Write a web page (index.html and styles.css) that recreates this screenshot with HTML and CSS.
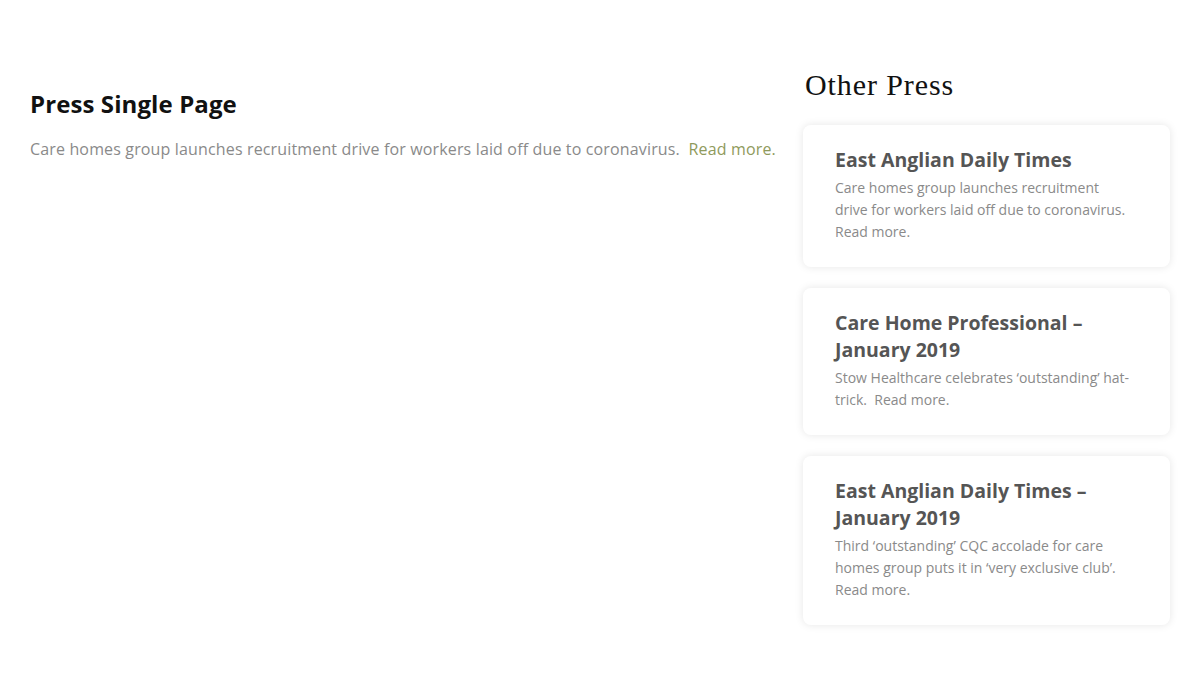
FILE: index.html
```html
<!DOCTYPE html>
<html>
<head>
  <title>Press Single Page</title>
  <link rel="stylesheet" href="styles.css">
</head>
<body>
  <div class="page">
    <main class="press-main">
      <h1 class="press-title">Press Single Page</h1>
      <p class="press-text">
        Care homes group launches recruitment drive for workers laid off due to coronavirus.&nbsp; <a href="#">Read more.</a>
      </p>
    </main>

    <aside class="press-side">
      <h2 class="side-title">Other Press</h2>

      <div class="press-card">
        <h3 class="card-title">East Anglian Daily Times</h3>
        <p class="card-text">Care homes group launches recruitment drive for workers laid off due to coronavirus. Read more.</p>
      </div>

      <div class="press-card">
        <h3 class="card-title">Care Home Professional – January 2019</h3>
        <p class="card-text">Stow Healthcare celebrates ‘outstanding’ hat-trick.&nbsp; Read more.</p>
      </div>

      <div class="press-card">
        <h3 class="card-title">East Anglian Daily Times – January 2019</h3>
        <p class="card-text">Third ‘outstanding’ CQC accolade for care homes group puts it in ‘very exclusive club’. Read more.</p>
      </div>
    </aside>
  </div>
</body>
</html>
```

FILE: styles.css
```css
body {
  font-family: "Open Sans", sans-serif;
  margin: 0;
  padding: 0;
  background-color: #fff;
  color: #111;
}

.page {
  display: grid;
  grid-template-columns: 1fr 367px;
  column-gap: 10px;
  padding: 0 30px 0 30px;
}

.press-main {
  padding-top: 88px;
}

.press-title {
  font-size: 24px;
  font-weight: 700;
  line-height: 32px;
  letter-spacing: 0.1px;
  margin: 0 0 16px;
  color: #111;
}

.press-text {
  font-size: 16px;
  line-height: 26px;
  letter-spacing: 0.15px;
  color: #8a8a8a;
  margin: 0;
}

.press-text a {
  color: #8f9a5c;
  text-decoration: none;
}

.press-side {
  padding-top: 64px;
}

.side-title {
  font-family: "Liberation Serif", serif;
  font-weight: 400;
  font-size: 30px;
  line-height: 42px;
  letter-spacing: 0.9px;
  margin: 0 0 19px 2px;
  color: #111;
}

.press-card {
  background: #fff;
  border-radius: 8px;
  box-shadow: 0 0 8px rgba(0, 0, 0, 0.1);
  padding: 21px 36px 24px 32px;
  margin-bottom: 21px;
}

.card-title {
  font-size: 19.5px;
  font-weight: 700;
  line-height: 27.5px;
  color: #555;
  margin: 0 0 3px;
}

.card-text {
  font-size: 14px;
  line-height: 22px;
  color: #8a8a8a;
  margin: 0;
}
```
